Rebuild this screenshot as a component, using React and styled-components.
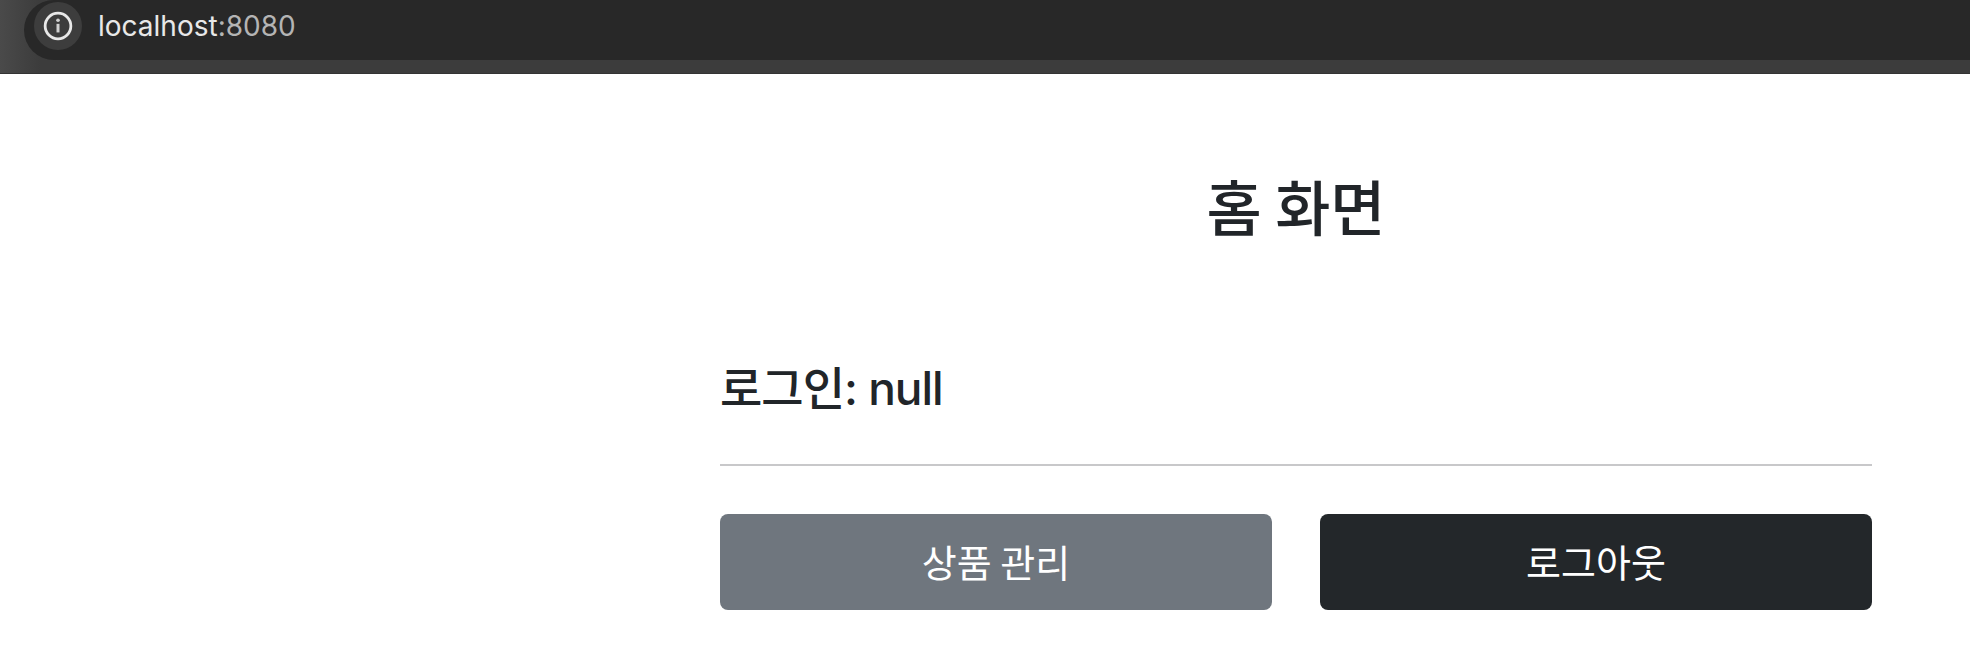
import styled, { createGlobalStyle } from "styled-components";

const GlobalStyle = createGlobalStyle`
  * {
    box-sizing: border-box;
  }
  body {
    margin: 0;
    background: #fff;
    font-family: "Inter", "Noto Sans CJK KR", sans-serif;
    color: #212529;
  }
`;

const AddressBar = styled.div`
  height: 74px;
  padding: 0 0 13px 24px;
  background: linear-gradient(90deg, #4a4a4a 0, #3c3c3c 40px);
  border-bottom: 1px solid #333;
`;

const AddressPill = styled.div`
  height: 60px;
  padding: 2px 0 10px 10px;
  display: flex;
  align-items: center;
  gap: 16px;
  background: #282828;
  border-radius: 30px 0 0 30px;
`;

const InfoButton = styled.div`
  width: 48px;
  height: 48px;
  display: flex;
  align-items: center;
  justify-content: center;
  border-radius: 50%;
  background: #3d3d3d;
`;

const Url = styled.div`
  font-size: 28px;
  line-height: 48px;
  color: #e8e8e8;
`;

const Port = styled.span`
  color: #b4b4b4;
`;

const Main = styled.main`
  width: 1152px;
  margin-left: 720px;
`;

const Title = styled.h1`
  margin: 0;
  padding-top: 89px;
  font-family: "Noto Sans CJK KR", sans-serif;
  font-size: 60px;
  line-height: 84px;
  font-weight: 500;
  text-align: center;
`;

const LoginText = styled.h2`
  margin: 0;
  padding-top: 107px;
  font-size: 46px;
  line-height: 68px;
  font-weight: 500;
  letter-spacing: -1px;
`;

const Divider = styled.hr`
  margin: 42px 0 48px;
  border: 0;
  height: 2px;
  background: #c8c8ca;
`;

const ButtonRow = styled.div`
  display: grid;
  grid-template-columns: 1fr 1fr;
  gap: 48px;
`;

const ActionButton = styled.button`
  height: 96px;
  padding: 0 0 4px;
  border: 0;
  border-radius: 8px;
  font-family: "Noto Sans CJK KR", sans-serif;
  font-size: 38px;
  color: #fff;
  background: ${(props) => (props.$dark ? "#23272a" : "#6f767e")};
`;

const InfoIcon = () => (
  <svg width="30" height="30" viewBox="0 0 28 28" fill="none">
    <circle cx="14" cy="14" r="12" stroke="#e8e8e8" strokeWidth="2.6" />
    <rect x="12.6" y="12" width="2.8" height="8" fill="#d0d0d0" />
    <circle cx="14" cy="8.6" r="1.7" fill="#d0d0d0" />
  </svg>
);

const App = () => {
  return (
    <>
      <GlobalStyle />
      <AddressBar>
        <AddressPill>
          <InfoButton>
            <InfoIcon />
          </InfoButton>
          <Url>
            localhost<Port>:8080</Port>
          </Url>
        </AddressPill>
      </AddressBar>
      <Main>
        <Title>홈 화면</Title>
        <LoginText>로그인: null</LoginText>
        <Divider />
        <ButtonRow>
          <ActionButton>상품 관리</ActionButton>
          <ActionButton $dark>로그아웃</ActionButton>
        </ButtonRow>
      </Main>
    </>
  );
};

export default App;
